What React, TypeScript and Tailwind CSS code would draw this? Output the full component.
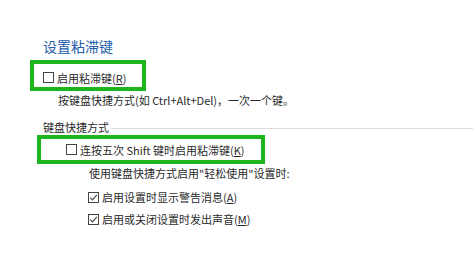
import React from "react";

function Check({ checked = false }: { checked?: boolean }) {
  return (
    <svg width="11" height="11" viewBox="0 0 11 11" className="shrink-0">
      <rect x="0.5" y="0.5" width="10" height="10" fill="#fff" stroke="#444444" strokeWidth="1" />
      {checked && (
        <path d="M2.2 5.6 L4.4 7.9 L8.9 2.8" fill="none" stroke="#444444" strokeWidth="1.1" />
      )}
    </svg>
  );
}

export default function App() {
  return (
    <div className="w-[473px] h-[254px] bg-white overflow-hidden text-[11px] leading-[16px] text-[#2a2a2a] font-['Noto_Sans_CJK_SC',sans-serif]">
      <div className="pt-[36px]">
        <div className="ml-[43px] text-[14px] leading-[20px] text-[#245dab]">设置粘滞键</div>
        <div className="mt-[4px] ml-[30px] w-[116px] h-[31px] border-4 border-[#1db41d] flex items-center pl-[9px] pt-[4px]">
          <Check />
          <span className="ml-[3px] whitespace-nowrap">
            启用粘滞键(<span className="underline">R</span>)
          </span>
        </div>
        <div className="mt-[1px] ml-[58px] whitespace-nowrap">按键盘快捷方式(如 Ctrl+Alt+Del)，一次一个键。</div>
        <div className="mt-[11px] ml-[43px] flex items-center">
          <span className="whitespace-nowrap">键盘快捷方式</span>
          <div className="flex-1 h-px bg-[#dcdcdc] ml-[2px] mt-[3px]" />
        </div>
        <div className="ml-[37px] w-[228px] h-[29px] border-4 border-[#1db41d] flex items-center pl-[25px]">
          <Check />
          <span className="ml-[3px] whitespace-nowrap">
            连按五次 Shift 键时启用粘滞键(<span className="underline">K</span>)
          </span>
        </div>
        <div className="mt-[1px] ml-[89px] whitespace-nowrap">使用键盘快捷方式启用"轻松使用"设置时:</div>
        <div className="mt-[8px] ml-[88px] flex items-center">
          <Check checked />
          <span className="ml-[3px] whitespace-nowrap">
            启用设置时显示警告消息(<span className="underline">A</span>)
          </span>
        </div>
        <div className="mt-[6px] ml-[88px] flex items-center">
          <Check checked />
          <span className="ml-[3px] whitespace-nowrap">
            启用或关闭设置时发出声音(<span className="underline">M</span>)
          </span>
        </div>
      </div>
    </div>
  );
}
